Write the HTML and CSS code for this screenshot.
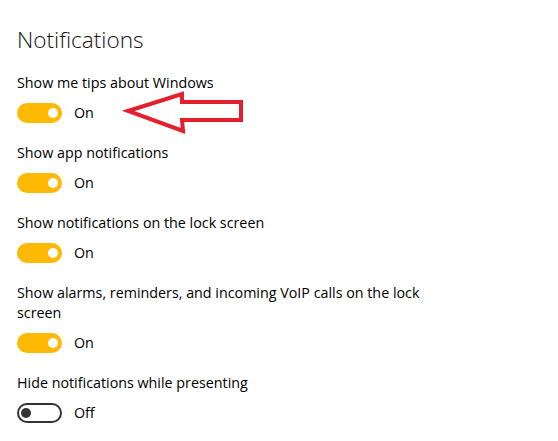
FILE: index.html
```html
<!DOCTYPE html>
<html>
<head>
<meta charset="utf-8">
<link rel="stylesheet" href="styles.css">
</head>
<body>
<main class="page">
  <h1 class="title">Notifications</h1>
  <div class="item">
    <div class="label">Show me tips about Windows</div>
    <div class="row"><span class="toggle on"><span class="knob"></span></span><span class="state">On</span></div>
  </div>
  <div class="item">
    <div class="label">Show app notifications</div>
    <div class="row"><span class="toggle on"><span class="knob"></span></span><span class="state">On</span></div>
  </div>
  <div class="item">
    <div class="label">Show notifications on the lock screen</div>
    <div class="row"><span class="toggle on"><span class="knob"></span></span><span class="state">On</span></div>
  </div>
  <div class="item">
    <div class="label">Show alarms, reminders, and incoming VoIP calls on the lock screen</div>
    <div class="row"><span class="toggle on"><span class="knob"></span></span><span class="state">On</span></div>
  </div>
  <div class="item">
    <div class="label">Hide notifications while presenting</div>
    <div class="row"><span class="toggle off"><span class="knob"></span></span><span class="state">Off</span></div>
  </div>
  <svg class="arrow" width="130" height="50" viewBox="120 88 130 50">
    <polygon points="128,111 182,94 182,102 241,102 241,120 182,120 183,131" fill="none" stroke="#e3202b" stroke-width="4" stroke-linejoin="miter"/>
  </svg>
</main>
</body>
</html>
```
FILE: styles.css
```css
html, body {
  margin: 0;
  padding: 0;
  background: #fff;
}
.page {
  position: relative;
  padding: 25px 0 0 17px;
  font-family: "Open Sans", "Noto Sans", sans-serif;
  color: #000;
  width: 420px;
}
.title {
  margin: 0 0 18px 0;
  font-weight: 300;
  font-size: 22.6px;
  line-height: 30px;
  color: #111;
}
.item {
  margin-bottom: 20px;
}
.label {
  font-size: 14.3px;
  line-height: 20px;
}
.row {
  display: flex;
  align-items: center;
  height: 20px;
  margin-top: 10px;
  gap: 12px;
}
.toggle {
  box-sizing: border-box;
  width: 45px;
  height: 20px;
  border-radius: 10px;
  display: flex;
  align-items: center;
  padding: 0 4px;
}
.toggle.on {
  background: #ffb900;
  justify-content: flex-end;
}
.toggle.off {
  border: 2px solid #333;
  justify-content: flex-start;
  padding: 0 2px;
}
.knob {
  width: 10px;
  height: 10px;
  border-radius: 50%;
}
.toggle.on .knob { background: #fff; }
.toggle.off .knob { background: #333; }
.state {
  font-size: 14.3px;
  line-height: 20px;
}
.arrow {
  position: absolute;
  left: 120px;
  top: 88px;
}
```
